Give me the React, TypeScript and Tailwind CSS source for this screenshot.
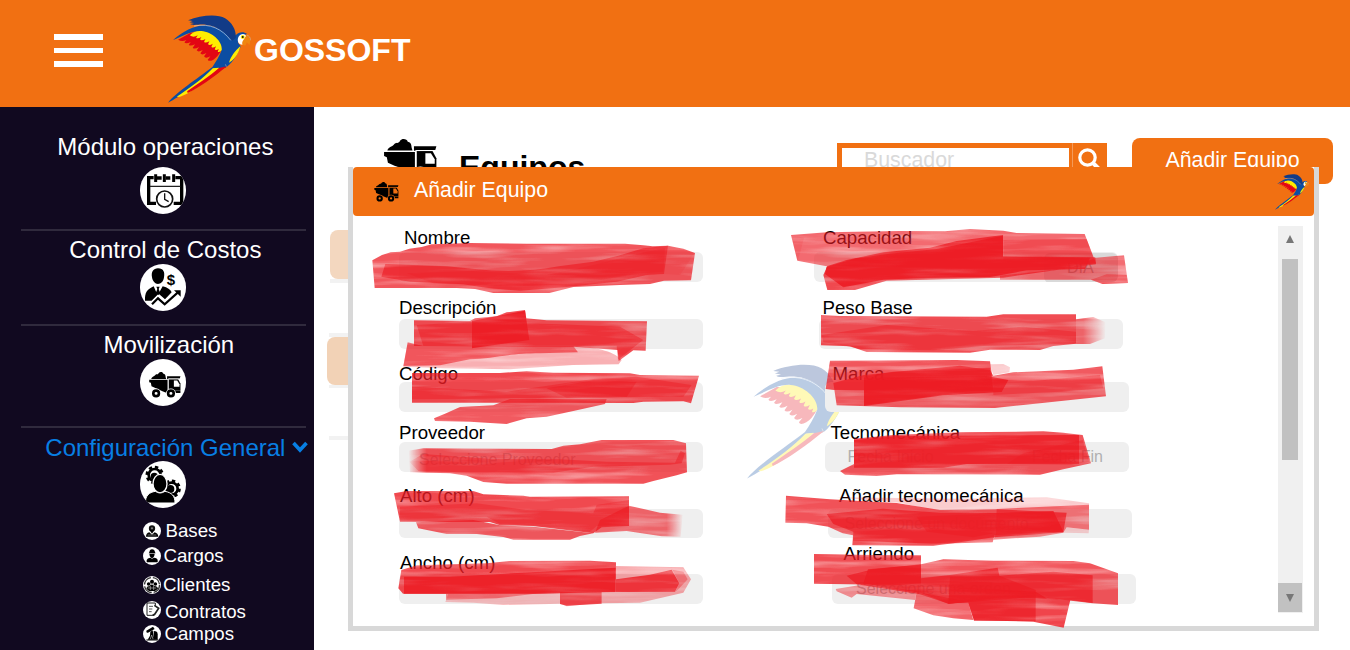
import React from "react";

type Stroke = { d: string; o?: number; fill?: string };

function Parrot({ className }: { className?: string }) {
  return (
    <svg viewBox="54 46 250 264" className={className} aria-hidden="true">
      <path fill="#e30613" d="M84 120 L122 99 L160 100 L205 145 L214 152 Q203 172 190 180 Q176 187 173 180 L181 170 Q166 178 162 170 L169 160 Q155 168 151 161 L158 151 Q144 159 140 152 L147 142 Q132 150 128 144 L135 134 Q120 141 116 135 L122 127 Q107 134 103 128 L109 121 Q95 127 84 120 Z" />
      <path fill="#ffec00" d="M119 107 C135 90 160 88 182 100 C205 112 222 134 216 151 Q208 159 203 156 L206 148 Q197 154 194 149 L198 140 Q187 147 184 141 L188 132 Q177 139 174 133 L178 125 Q165 132 162 126 L166 118 Q153 125 150 119 L154 112 Q142 119 138 114 L143 107 Q130 115 119 107 Z" />
      <path fill="#0c4da2" d="M69 121 C98 96 135 75 170 77 C205 80 232 98 246 122 C255 100 276 91 291 103 L270 110 L264 129 L272 140 C262 168 240 198 226 204 L208 205 L190 206 C150 247 88 293 54 309 C76 280 140 238 187 202 C197 187 208 170 215 151 C218 125 185 96 154 94 C124 92 96 111 69 121 Z" />
      <path fill="#123b87" d="M114 62 C150 47 202 42 225 56 C248 70 259 94 257 115 L246 123 C230 100 202 78 166 75 C150 73 125 79 121 73 L132 70 L118 68 L128 64 Z" />
      <path fill="none" stroke="#d8e2ef" strokeWidth="1.8" d="M132 79 C180 70 216 88 242 122" />
      <path fill="#ffec00" d="M271 139 C266 164 250 182 237 189 C242 170 255 154 271 139 Z M188 206 L207 204 C172 243 118 284 86 292 L80 291 C118 266 160 236 188 206 Z" />
      <path fill="#e30613" d="M207 205 L231 200 C190 233 145 266 113 280 L111 275 C145 251 176 232 207 205 Z" />
      <path fill="#fff" d="M265 112 C271 100 287 100 288 111 C286 119 278 123 277 135 C265 134 260 124 265 112 Z" />
      <circle cx="278" cy="112" r="6" fill="#ffec00" />
      <circle cx="278" cy="112" r="3" fill="#111" />
      <path fill="#ef8611" d="M289 107 C298 107 303 120 298 136 L290 128 L287 137 C278 139 274 131 278 124 Z" />
      <path fill="none" stroke="#c9c3bb" strokeWidth="1.5" d="M290 106 Q302 110 301 122 M226 194 l3 7" />
    </svg>
  );
}

function Truck({ className, line = "#fff" }: { className?: string; line?: string }) {
  return (
    <svg viewBox="448 185 96 79" className={className} aria-hidden="true">
      <path d="M454 206 C455 200 463 199 466 195 C469 190 475 194 477 188 C481 183 490 185 491 190 C500 192 496 199 500 206 Z" />
      <path d="M448 208.5 H504 V248 H500 L490 244 L455 228 L453 218 L448 216 Z" />
      <path d="M502 198 H543 L541 205 H507 L502 207 Z" />
      <path d="M507 207 H536 L543 220 V242 H507 Z" />
      <path d="M526 243 H543 V249 H528 Z" />
      <path fill={line} d="M523 211 H533 L540 222 V230 L523 230 Z" />
      <path fill="none" stroke={line} strokeWidth="1.8" d="M501 198 V207 M506 207 V240 M507 206 H541" />
      <circle cx="469" cy="250" r="15" fill={line} />
      <circle cx="514" cy="250" r="15" fill={line} />
      <circle cx="469" cy="250" r="8.5" fill={line} stroke="#000" strokeWidth="8" />
      <circle cx="514" cy="250" r="8.5" fill={line} stroke="#000" strokeWidth="8" />
    </svg>
  );
}

function CalendarIcon() {
  return (
    <svg viewBox="419 171 141 141" className="h-[47px] w-[47px] shrink-0">
      <path d="M470 280 H448 V203 H463 M473 204 h14 M499 204 h14 M528 203 H547 V280 H523" fill="none" stroke="#000" strokeWidth="10" />
      <path d="M469 193 v23 M495 193 v23 M523 193 v23" stroke="#000" strokeWidth="9" />
      <path d="M452 229 H543" stroke="#222" strokeWidth="4" />
      <circle cx="496" cy="267" r="24" fill="#fff" stroke="#111" strokeWidth="5" />
      <path d="M496 250 v18 l12 7" fill="none" stroke="#111" strokeWidth="4" />
    </svg>
  );
}

function CostIcon() {
  return (
    <svg viewBox="419 462 141 141" className="h-[47px] w-[47px] shrink-0">
      <path d="M476 475 C493 475 497 488 494 502 C492 516 484 522 476 522 C467 522 460 514 458 502 C455 486 462 475 476 475 Z" />
      <path d="M437 572 C436 548 443 538 463 529 L475 556 L490 529 C505 533 513 539 517 547 L497 568 L478 551 L457 572 Z" />
      <path d="M471 530 h10 l-3 7 5 13 -7 6 -7 -6 5 -13 Z" />
      <path d="M456 583 L476 563 L496 582 L535 547" fill="none" stroke="#fff" strokeWidth="13" />
      <path d="M458 583 L476 565 L496 583 L535 548" fill="none" stroke="#000" strokeWidth="6.5" />
      <path d="M524 541 H544 V560 Z" />
      <text x="502" y="526" fontSize="45" fontWeight="700" fontFamily="Liberation Sans, sans-serif">$</text>
    </svg>
  );
}

function ConfigIcon() {
  return (
    <svg viewBox="419 454 141 141" className="h-[47px] w-[47px] shrink-0">
      <circle cx="466" cy="496" r="18" fill="none" stroke="#000" strokeWidth="8" />
      <circle cx="466" cy="496" r="23.5" fill="none" stroke="#000" strokeWidth="8" strokeDasharray="10 8.45" />
      <circle cx="465" cy="500" r="11" />
      <circle cx="517" cy="537" r="18" fill="none" stroke="#000" strokeWidth="8" />
      <circle cx="517" cy="537" r="23.5" fill="none" stroke="#000" strokeWidth="8" strokeDasharray="10 8.45" />
      <circle cx="513" cy="538" r="12" />
      <ellipse cx="482" cy="522" rx="21" ry="28" stroke="#fff" strokeWidth="4" />
      <path d="M438 580 C438 558 449 548 468 545 Q482 555 497 545 C517 549 527 558 527 580 Z" stroke="#fff" strokeWidth="3" />
    </svg>
  );
}

function SmallIcon({ kind }: { kind: string }) {
  return (
    <svg viewBox="0 0 54 54" className="h-[18px] w-[18px]">
      <circle cx="27" cy="27" r="27" fill="#fff" />
      {kind === "bases" && (
        <g>
          <circle cx="27" cy="19" r="6.5" fill="#777" stroke="#111" strokeWidth="6" />
          <path d="M19 23 L27 35 L35 23 Z" />
          <path d="M9 44 Q9 33 19 31 L27 38 L35 31 Q45 34 46 44 Z" />
          <path d="M14 39 h26" stroke="#999" strokeWidth="2" />
        </g>
      )}
      {kind === "cargos" && (
        <g>
          <path d="M19 16 Q20 7 27 7 Q35 7 36 16 L38 19 H17 Z" />
          <path d="M19 20 H35 Q34 32 27 33 Q20 32 19 20 Z" />
          <path d="M11 46 V39 Q13 33 22 32 L27 35 L33 32 Q43 33 44 39 V46 Z" />
        </g>
      )}
      {kind === "clientes" && (
        <g>
          <circle cx="27" cy="27" r="22.5" fill="none" stroke="#333" strokeWidth="4" strokeDasharray="30 6" />
          <circle cx="27" cy="17" r="6" />
          <circle cx="17" cy="24" r="5.5" />
          <circle cx="37" cy="24" r="5.5" />
          <path d="M10 38 Q12 29 19 31 Q26 21 33 30 Q43 29 45 38 L36 45 H18 Z" />
          <path d="M14 36 h26 M22 30 v12 M32 30 v12" stroke="#bbb" strokeWidth="2" />
        </g>
      )}
      {kind === "contratos" && (
        <g fill="none" stroke="#222" strokeWidth="3">
          <path d="M37 14 V6 H12 V43 H34" />
          <path d="M18 16 h12 M18 24 h10 M18 32 h8" stroke="#555" />
          <path d="M34 13 L47 22 L35 40 L29 43" strokeWidth="5" />
        </g>
      )}
      {kind === "campos" && (
        <g>
          <path d="M10 17 L30 5 L35 12 L15 23 Q9 25 10 17 Z" />
          <path d="M22 20 L29 16 L34 44 H14 L21 32 Z" />
          <path d="M32 18 Q44 18 44 28 V44 H33 Z" />
          <path d="M10 45 h36" stroke="#000" strokeWidth="3" />
          <path d="M22 42 l4 -12 4 12" fill="none" stroke="#bbb" strokeWidth="2" />
        </g>
      )}
    </svg>
  );
}

function Circle({ children, className }: { children: React.ReactNode; className: string }) {
  return (
    <div className={`ml-[139.5px] flex h-[47px] w-[46.5px] shrink-0 items-center justify-center overflow-hidden rounded-full bg-white ${className}`}>
      {children}
    </div>
  );
}

const submenu = [
  { label: "Bases", kind: "bases", row: "h-[25px]", icon: "mt-px", text: "ml-[4.5px]" },
  { label: "Cargos", kind: "cargos", row: "h-[29px]", icon: "mt-px", text: "ml-[2.5px]" },
  { label: "Clientes", kind: "clientes", row: "h-[27px]", icon: "mt-px", text: "ml-[2px]" },
  { label: "Contratos", kind: "contratos", row: "h-[22px]", icon: "-mt-px", text: "ml-[4px]" },
  { label: "Campos", kind: "campos", row: "h-[22px]", icon: "mt-px", text: "ml-[3.5px]" },
];

function Sidebar() {
  return (
    <aside className="flex h-full w-[314px] shrink-0 flex-col bg-[#110920] text-[24px] leading-7 text-white">
      <div className="mt-[26px] h-7 shrink-0 pl-[57.3px]">Módulo operaciones</div>
      <Circle className="mt-1.5"><CalendarIcon /></Circle>
      <div className="mt-[15px] ml-[21px] h-0.5 w-[285px] shrink-0 bg-[#302a3d]" />
      <div className="mt-[5px] h-7 shrink-0 pl-[69.3px]">Control de Costos</div>
      <Circle className=""><CostIcon /></Circle>
      <div className="mt-[13px] ml-[21px] h-0.5 w-[285px] shrink-0 bg-[#302a3d]" />
      <div className="mt-[5px] h-7 shrink-0 pl-[103.5px]">Movilización</div>
      <Circle className=""><Truck className="mt-1 ml-[4px] h-[26px] w-8" /></Circle>
      <div className="mt-5 ml-[21px] h-0.5 w-[285px] shrink-0 bg-[#302a3d]" />
      <div className="mt-1.5 flex h-7 shrink-0 pl-[45.3px] text-[#087fe4]">
        <span className="w-[247px] shrink-0 whitespace-nowrap">Configuración General</span>
        <svg viewBox="0 0 16 12" className="mt-[7px] h-3 w-4"><path d="M1.5 2 L8 9 L14.5 2" fill="none" stroke="currentColor" strokeWidth="3.6" /></svg>
      </div>
      <Circle className="-mt-px"><ConfigIcon /></Circle>
      <nav className="mt-[13px] ml-[143px] flex flex-col text-[18.67px] leading-5">
        {submenu.map((m) => (
          <div key={m.label} className={`flex shrink-0 items-start ${m.row}`}>
            <span className={m.icon}><SmallIcon kind={m.kind} /></span>
            <span className={m.text}>{m.label}</span>
          </div>
        ))}
      </nav>
    </aside>
  );
}

type FieldProps = {
  label: string;
  row: string;
  pad: string;
  box: string;
  children?: React.ReactNode;
};

function Field({ label, row, pad, box, children }: FieldProps) {
  return (
    <div className={`shrink-0 ${row}`}>
      <div className={`h-5 whitespace-nowrap ${pad}`}>{label}</div>
      <div className={`flex h-[29.7px] w-[304px] overflow-hidden rounded-md bg-[#efefef] text-[16px] leading-[30px] whitespace-nowrap text-[#b0b0b0] ${box}`}>{children}</div>
    </div>
  );
}

function Modal() {
  return (
    <section className="absolute top-[167px] left-[348px] flex h-[464px] w-[970.5px] flex-col border-x-[5px] border-b-[5px] border-[#d8d8d8] bg-white">
      <header className="flex h-[49px] shrink-0 items-start rounded bg-[#f17012] text-white">
        <Truck className="mt-[15px] ml-[21px] h-5 w-[25px]" line="#f17012" />
        <h2 className="mt-[10.5px] ml-[15px] text-[21.33px] leading-6">Añadir Equipo</h2>
        <Parrot className="mt-[7px] mr-[5px] ml-auto h-9 w-[34px]" />
      </header>
      <div className="relative flex flex-1 items-start text-[18.67px] leading-5 text-black">
        <Parrot className="absolute top-[148px] left-[394px] h-[115px] w-[109px] opacity-[0.28]" />
        <div className="relative mt-3 ml-[46px] flex w-[304px] flex-col">
          <Field label="Nombre" row="h-[70px]" pad="pl-[5px]" box="mt-[4px]" />
          <Field label="Descripción" row="h-[66px]" pad="" box="mt-px" />
          <Field label="Código" row="h-[59px]" pad="" box="-mt-[2px]" />
          <Field label="Proveedor" row="h-[63px]" pad="" box="-mt-px">
            <span className="mt-[3px] ml-5">Seleccione Proveedor</span>
          </Field>
          <Field label="Alto (cm)" row="h-[67px]" pad="pl-px" box="mt-[2.5px]" />
          <Field label="Ancho (cm)" row="h-[59px]" pad="pl-px" box="mt-px" />
        </div>
        <div className="relative mt-3 ml-[111px] flex w-[322px] flex-col">
          <Field label="Capacidad" row="h-[70px]" pad="pl-[9px]" box="mt-[4px]">
            <span className="mt-px ml-auto h-[30px] w-[74px] rounded-md bg-[#d9d9d9] pl-[23px] text-[#969696]">DÍA</span>
          </Field>
          <Field label="Peso Base" row="h-[66px]" pad="pl-[8.5px]" box="mt-px ml-[5px]" />
          <Field label="Marca" row="h-[59px]" pad="pl-[18.5px]" box="-mt-[2px] ml-[11px]" />
          <Field label="Tecnomecánica" row="h-[63px]" pad="pl-[16.5px]" box="-mt-px ml-[10.5px]">
            <span className="ml-[23px]">Fecha Inicio</span>
            <span className="ml-[98px]">Fecha Fin</span>
          </Field>
          <Field label="Añadir tecnomecánica" row="h-[58px]" pad="pl-[25px]" box="mt-[2.5px] ml-[13.5px]">
            <span className="ml-[17px]">Seleccione un documento</span>
          </Field>
          <Field label="Arriendo" row="h-[59px]" pad="pl-[29.5px]" box="mt-[10px] ml-[18px]">
            <span className="ml-6">Seleccione una orden</span>
          </Field>
        </div>
        <div className="mt-[10px] mr-[11px] ml-auto flex h-[387px] w-[25px] flex-col items-center bg-[#f0f0f0]">
          <svg viewBox="0 0 8 8" className="mt-[9px] h-2 w-2 shrink-0"><path d="M4 0 L8 8 H0 Z" fill="#777" /></svg>
          <div className="mt-4 h-[201px] w-4 shrink-0 bg-[#c1c1c1]" />
          <div className="mt-auto mb-px flex h-[29px] w-6 shrink-0 items-center justify-center bg-[#c1c1c1]">
            <svg viewBox="0 0 8 8" className="mt-px h-2 w-2"><path d="M4 8 L8 0 H0 Z" fill="#777" /></svg>
          </div>
        </div>
      </div>
    </section>
  );
}

const markerGroups: { origin: string; strokes: Stroke[] }[] = [
  {
    origin: "translate(360 225) scale(0.33333)",
    strokes: [
      { d: "M37 106 L66 90 L92 82 L120 80 L148 71 L185 66 L215 58 L330 54 L500 56 L795 56 L850 61 L878 64 L924 62 L970 71 L1005 84 L993 166 L912 167 L870 177 L780 180 L640 186 L568 204 L400 204 L345 192 L290 189 L44 189 Z", o: 0.74 },
      { d: "M76 117 L260 124 L345 132 C430 142 520 139 596 124 L700 110 L775 92 L850 70 L924 62 L912 147 L860 150 L770 170 L620 186 L480 197 C400 192 350 185 310 178 L150 170 L64 155 Z", o: 0.66 },
      { d: "M140 145 L340 138 L560 150 L700 120 L860 80 L915 70 L910 140 L830 146 L650 178 L440 184 L220 175 Z", o: 0.3 },
      { d: "M924 62 L1002 84 L990 105 L960 150 L912 147 Z", o: 0.12 },
      { d: "M162 286 L330 288 L345 280 L410 274 L440 262 L495 255 L499 280 L560 286 L861 289 L857 377 L820 376 L776 408 L773 375 L640 365 L162 363 Z", o: 0.78 },
      { d: "M170 300 L190 363 L770 362 L774 404 L830 360 L850 345 L780 305 L600 298 L336 290 Z", o: 0.5 },
      { d: "M336 288 L495 257 L508 345 L336 370 Z", o: 0.9 },
      { d: "M143 355 L190 363 L640 363 C720 367 765 382 785 405 L776 418 L640 420 L560 425 L450 433 L250 430 L130 425 Z", o: 0.34 },
      { d: "M143 352 L190 363 L640 363 L654 382 L540 385 C440 385 400 401 330 403 L240 421 L130 423 Z", o: 0.6 },
      { d: "M156 444 L420 444 L500 439 L580 443 L810 445 L840 450 L1017 452 L993 535 L970 529 L850 530 L820 534 L156 533 Z", o: 0.8 },
      { d: "M156 485 L440 500 L700 462 L830 455 L995 480 L970 515 L720 518 L480 520 L156 523 Z", o: 0.45 },
      { d: "M560 490 L700 466 L830 470 L800 516 L620 518 Z", o: 0.5 },
      { d: "M222 580 L255 566 L300 546 L400 541 L450 522 L740 522 L735 537 L640 558 L560 575 L500 580 L440 597 L330 590 L225 588 Z", o: 0.72 },
    ],
  },
  {
    origin: "translate(360 420) scale(0.33333)",
    strokes: [
      { d: "M145 92 L190 85 L575 87 L610 77 L660 73 L725 60 L940 60 L978 70 L981 157 L950 166 L880 183 L850 191 L440 191 L370 186 L320 167 L270 160 L150 157 Z", o: 0.76, fill: "url(#fadeL)" },
      { d: "M148 125 L190 102 L400 117 L600 118 L740 125 L945 128 L962 92 L975 100 L965 130 L930 134 L700 140 L580 158 L300 157 L175 153 Z", o: 0.5, fill: "url(#fadeL)" },
      { d: "M102 220 L140 213 L340 213 L370 223 L490 227 L510 230 L807 229 L807 318 L725 322 L700 340 L520 318 L420 316 L390 306 L120 305 Z", o: 0.8 },
      { d: "M120 260 L350 250 L500 270 L700 280 L710 255 L807 240 L807 318 L710 318 L690 335 L520 318 L420 312 L380 290 L120 298 Z", o: 0.4 },
      { d: "M168 307 L340 300 L420 316 L520 320 L700 340 L660 348 L630 359 L460 359 L430 351 L350 342 L260 342 L175 325 Z", o: 0.72 },
      { d: "M720 300 L807 257 L900 278 L968 284 L962 350 L905 349 L800 333 L705 338 Z", o: 0.66, fill: "url(#fadeR)" },
      { d: "M124 450 L170 436 L380 430 L450 423 L690 422 L768 427 L767 516 L525 521 L129 521 L115 505 Z", o: 0.8 },
      { d: "M132 470 L270 470 L767 443 L767 516 L525 521 L132 521 Z", o: 0.85 },
      { d: "M768 438 L970 442 L993 478 L970 518 L840 548 L725 550 L725 518 L767 516 Z", o: 0.38 },
      { d: "M768 478 L870 464 L935 449 L958 490 L945 515 L768 516 Z", o: 0.82 },
      { d: "M937 449 L970 455 L983 478 L958 505 L946 515 L958 490 Z", o: 0.36 },
      { d: "M265 521 L600 519 L725 519 L725 548 L620 559 L600 551 L430 555 L340 548 L256 546 Z", o: 0.28 },
      { d: "M600 516 L725 516 L725 551 L620 557 L600 552 Z", o: 0.76 },
      { d: "M258 521 L525 521 L410 535 L258 539 Z", o: 0.5 },
    ],
  },
  {
    origin: "translate(740 225) scale(0.33333)",
    strokes: [
      { d: "M153 30 L260 22 L480 18 L615 19 L690 12 L790 17 L830 24 L1034 27 L1068 115 L990 123 L770 130 L260 124 L172 107 Z", o: 0.65 },
      { d: "M153 30 L192 38 L180 85 L172 107 Z", o: 0.12 },
      { d: "M790 45 L1040 42 L1060 98 L790 108 Z", o: 0.38 },
      { d: "M250 150 L262 123 L320 105 L430 82 L570 68 L650 48 L789 30 L789 94 L1066 97 L1068 118 L950 135 L790 158 L440 167 L345 195 L262 195 Z", o: 0.8 },
      { d: "M260 125 L350 100 L450 86 L590 72 L789 32 L789 96 L1050 98 L1035 132 L860 136 L750 156 L520 160 L430 164 L310 187 L255 147 Z", o: 0.9 },
      { d: "M990 130 L1068 98 L1152 91 L1164 174 L1088 177 L1053 164 L780 164 L780 152 Z", o: 0.64 },
      { d: "M1053 164 L1100 148 L1160 150 L1164 174 L1088 177 Z", o: 0.5 },
      { d: "M243 270 L300 273 L740 275 L790 268 L1008 268 L1008 356 L940 363 L900 375 L750 374 L690 383 L380 381 L330 364 L243 361 Z", o: 0.78 },
      { d: "M245 330 L440 300 L700 318 L850 305 L1008 320 L1008 356 L730 363 L580 376 L360 372 L310 361 L250 352 Z", o: 0.45 },
      { d: "M1008 283 L1060 276 L1097 292 L1095 340 L1050 357 L1008 357 Z", o: 0.66, fill: "url(#fadeR2)" },
      { d: "M270 407 L650 405 L750 409 L756 450 L760 497 L280 495 L257 492 Z", o: 0.74 },
      { d: "M280 474 L372 450 L530 434 L660 422 L750 435 L760 452 L820 442 L1000 434 L1087 424 L1098 514 L900 535 L765 549 L480 547 L290 541 Z", o: 0.72 },
      { d: "M750 418 L790 417 L810 427 L808 442 L760 450 Z", o: 0.22 },
      { d: "M372 458 L740 453 L805 465 L785 501 L610 511 L372 543 Z", o: 0.86 },
      { d: "M372 455 L460 440 L750 428 L758 496 L690 498 L372 540 Z", o: 0.62 },
      { d: "M760 464 L880 468 L1080 450 L1090 490 L960 500 L760 510 Z", o: 0.42 },
    ],
  },
  {
    origin: "translate(740 420) scale(0.33333)",
    strokes: [
      { d: "M342 56 L460 45 L660 37 L910 34 L970 38 L1028 45 L1053 130 L970 148 L900 164 L470 163 L410 168 L315 164 L300 153 L342 132 Z", o: 0.74 },
      { d: "M342 60 L470 48 L1017 45 L1017 131 L680 132 L610 143 L342 143 Z", o: 0.82 },
      { d: "M850 100 L1028 60 L1048 125 L990 134 L800 132 Z", o: 0.4 },
      { d: "M138 227 L270 238 L470 249 L600 270 L770 268 L980 278 L970 337 L760 352 L640 370 L580 377 L337 376 L339 346 L308 340 L265 320 L200 310 L136 308 Z", o: 0.76 },
      { d: "M260 282 L429 266 L600 278 L767 279 L940 273 L970 335 L764 345 L758 367 L590 371 L339 362 L340 335 L280 312 Z", o: 0.74 },
      { d: "M530 290 L767 280 L940 274 L970 335 L762 340 L700 352 L560 335 Z", o: 0.5 },
      { d: "M290 232 L670 236 L920 232 L1047 250 L1047 266 L700 268 L600 275 L480 248 Z", o: 0.22 },
      { d: "M770 267 L1047 254 L1047 329 L980 322 L970 338 L900 350 L760 359 L768 340 Z", o: 0.6 },
      { d: "M980 322 L1047 329 L1046 340 L970 338 Z", o: 0.2 },
      { d: "M222 402 L400 405 L543 406 L543 490 L480 495 L222 491 Z", o: 0.78 },
      { d: "M320 467 L400 448 L543 433 L610 418 L760 422 L1000 423 L1050 430 L1134 460 L1134 555 L1058 550 L890 530 L625 551 L540 523 L350 493 Z", o: 0.74 },
      { d: "M384 448 L543 434 L543 518 L450 505 L370 490 Z", o: 0.8 },
      { d: "M543 475 L630 465 L773 443 L778 467 L940 455 L1058 466 L1058 549 L990 540 L800 530 L625 551 L543 518 Z", o: 0.72 },
      { d: "M287 507 L375 493 L530 514 L525 540 L350 522 L335 533 L290 514 Z", o: 0.48 },
      { d: "M530 515 L684 545 L700 600 L640 595 L580 586 L521 565 Z", o: 0.68 },
      { d: "M630 500 L887 515 L920 535 L991 540 L971 623 L880 605 L702 601 L684 545 L625 551 Z", o: 0.82 },
      { d: "M630 470 L778 467 L887 510 L887 603 L702 602 L684 548 L625 550 Z", o: 0.7 },
    ],
  },
];

function MarkerLayer() {
  return (
    <svg viewBox="0 0 1350 650" className="pointer-events-none absolute inset-0 h-[650px] w-[1350px]" aria-hidden="true">
      <defs>
        <filter id="bristle" x="-2%" y="-5%" width="104%" height="110%" colorInterpolationFilters="sRGB">
          <feTurbulence type="fractalNoise" baseFrequency="0.004 0.045" numOctaves="3" seed="8" result="n" />
          <feColorMatrix in="n" type="matrix" values="0 0 0 0 0  0 0 0 0 0  0 0 0 0 0  1 0 0 0 0.46" result="a" />
          <feComposite in="SourceGraphic" in2="a" operator="in" />
        </filter>
        <linearGradient id="fadeL" gradientUnits="userSpaceOnUse" x1="145" y1="0" x2="200" y2="0">
          <stop offset="0" stopColor="#ed1c24" stopOpacity="0" />
          <stop offset="1" stopColor="#ed1c24" />
        </linearGradient>
        <linearGradient id="fadeR" gradientUnits="userSpaceOnUse" x1="920" y1="0" x2="970" y2="0">
          <stop offset="0" stopColor="#ed1c24" />
          <stop offset="1" stopColor="#ed1c24" stopOpacity="0" />
        </linearGradient>
        <linearGradient id="fadeR2" gradientUnits="userSpaceOnUse" x1="1030" y1="0" x2="1098" y2="0">
          <stop offset="0" stopColor="#ed1c24" />
          <stop offset="1" stopColor="#ed1c24" stopOpacity="0" />
        </linearGradient>
      </defs>
      {markerGroups.map((g) => (
        <g key={g.origin} transform={g.origin}>
          {g.strokes.map((s, i) => (
            <path key={i} d={s.d} fill={s.fill ?? "#ed1c24"} opacity={s.o} filter="url(#bristle)" />
          ))}
        </g>
      ))}
    </svg>
  );
}

export default function App() {
  return (
    <div className="relative flex h-[650px] w-[1350px] flex-col overflow-hidden bg-white font-['Liberation_Sans',Arial,sans-serif]">
      <header className="flex h-[107px] shrink-0 items-start bg-[#f17012] text-white">
        <div className="mt-[34px] ml-[54.4px] flex w-[49px] flex-col gap-[8px]">
          <span className="h-[5.5px] bg-white" />
          <span className="h-[5.5px] bg-white" />
          <span className="h-[5.5px] bg-white" />
        </div>
        <Parrot className="mt-[15px] ml-[64.6px] h-[88px] w-[83.5px]" />
        <h1 className="mt-8 ml-[2.5px] text-[32px] leading-9 font-bold">GOSSOFT</h1>
      </header>
      <div className="flex h-[543px] shrink-0">
        <Sidebar />
        <main className="flex flex-1 flex-col">
          <div className="flex h-[123px] items-start">
            <Truck className="mt-8 ml-[70px] h-[43.5px] w-[53px]" />
            <h2 className="mt-[42px] ml-[22px] h-[18px] w-[378px] overflow-hidden text-[32px] leading-9 font-bold text-black">Equipos</h2>
            <div className="mt-9 flex h-[38px] w-[270px] bg-[#f17012]">
              <div className="mt-[5px] ml-[5px] h-7 w-[227px] bg-white pl-[22px] text-[21.33px] leading-6 text-[#d9d9d9]">Buscador</div>
              <div className="ml-[3px] w-px bg-[#f49a58]" />
              <svg viewBox="0 0 24 26" className="mt-1 ml-1 h-[26px] w-6"><circle cx="10.5" cy="10.5" r="7.7" fill="none" stroke="#fff" strokeWidth="3.2" /><path d="M15.5 15.5 L22 22" stroke="#fff" strokeWidth="4" /></svg>
            </div>
            <button className="mt-[30.5px] ml-[25px] h-[46px] w-[201px] rounded-lg bg-[#f17012] pb-[2px] text-[21.33px] leading-6 text-white">Añadir Equipo</button>
          </div>
          <div className="ml-[15.5px] h-[49px] w-40 rounded-lg bg-[#f3d7bf]" />
          <div className="ml-4 h-1 w-40 bg-[#f2f2f2]" />
          <div className="mt-[50px] ml-[15px] h-1 w-40 bg-[#f2f2f2]" />
          <div className="ml-[12.5px] h-12 w-40 rounded-lg bg-[#f2d2b6]" />
          <div className="ml-[15px] h-[3px] w-40 bg-[#f2f2f2]" />
          <div className="mt-12 ml-[15px] h-1 w-40 bg-[#f2f2f2]" />
        </main>
      </div>
      <Modal />
      <MarkerLayer />
    </div>
  );
}
